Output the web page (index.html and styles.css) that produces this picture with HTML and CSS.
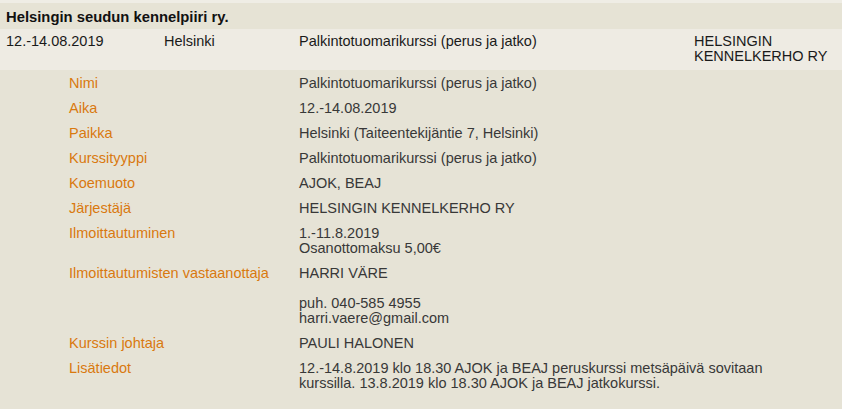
FILE: index.html
```html
<!DOCTYPE html>
<html lang="fi">
<head>
    <meta charset="UTF-8">
    <title>Kurssit - Helsingin seudun kennelpiiri ry.</title>
    <link rel="stylesheet" href="styles.css">
</head>
<body>
    <div class="event">
        <!-- Piiri -->
        <div class="district">Helsingin seudun kennelpiiri ry.</div>

        <!-- Yhteenveto -->
        <div class="summary">
            <div>12.-14.08.2019</div>
            <div>Helsinki</div>
            <div>Palkintotuomarikurssi (perus ja jatko)</div>
            <div>HELSINGIN<br>KENNELKERHO RY</div>
        </div>

        <!-- Tiedot -->
        <div class="details">
            <div class="label">Nimi</div>
            <div class="value">Palkintotuomarikurssi (perus ja jatko)</div>

            <div class="label">Aika</div>
            <div class="value">12.-14.08.2019</div>

            <div class="label">Paikka</div>
            <div class="value">Helsinki (Taiteentekijäntie 7, Helsinki)</div>

            <div class="label">Kurssityyppi</div>
            <div class="value">Palkintotuomarikurssi (perus ja jatko)</div>

            <div class="label">Koemuoto</div>
            <div class="value">AJOK, BEAJ</div>

            <div class="label">Järjestäjä</div>
            <div class="value">HELSINGIN KENNELKERHO RY</div>

            <div class="label">Ilmoittautuminen</div>
            <div class="value">1.-11.8.2019<br>Osanottomaksu 5,00€</div>

            <div class="label">Ilmoittautumisten vastaanottaja</div>
            <div class="value">HARRI VÄRE<br><br>puh. 040-585 4955<br>harri.vaere@gmail.com</div>

            <div class="label">Kurssin johtaja</div>
            <div class="value">PAULI HALONEN</div>

            <div class="label">Lisätiedot</div>
            <div class="value">12.-14.8.2019 klo 18.30 AJOK ja BEAJ peruskurssi metsäpäivä sovitaan kurssilla. 13.8.2019 klo 18.30 AJOK ja BEAJ jatkokurssi.</div>
        </div>
    </div>
</body>
</html>
```

FILE: styles.css
```css
/* Yleiset */
* {
    margin: 0;
    padding: 0;
    box-sizing: border-box;
}

body {
    background: #e6e3d6;
    font-family: 'Liberation Sans', Arial, sans-serif;
    font-size: 14.5px;
    line-height: 15px;
    color: #333;
}

.event {
    border-top: 3px solid #efede5;
}

/* Piiri */
.district {
    background: #e6e3d5;
    color: #111;
    font-size: 14.8px;
    font-weight: bold;
    padding: 7px 6px 4px;
}

/* Yhteenveto */
.summary {
    display: grid;
    grid-template-columns: 158px 135px 395px 1fr;
    background: #eeebe3;
    color: #1a1a1a;
    padding: 5px 6px 6px;
}

/* Tiedot */
.details {
    display: grid;
    grid-template-columns: 230px 1fr;
    row-gap: 10px;
    padding: 6px 44px 20px 69px;
}

.label {
    color: #d9790f;
}

.value {
    color: #383838;
}
```
